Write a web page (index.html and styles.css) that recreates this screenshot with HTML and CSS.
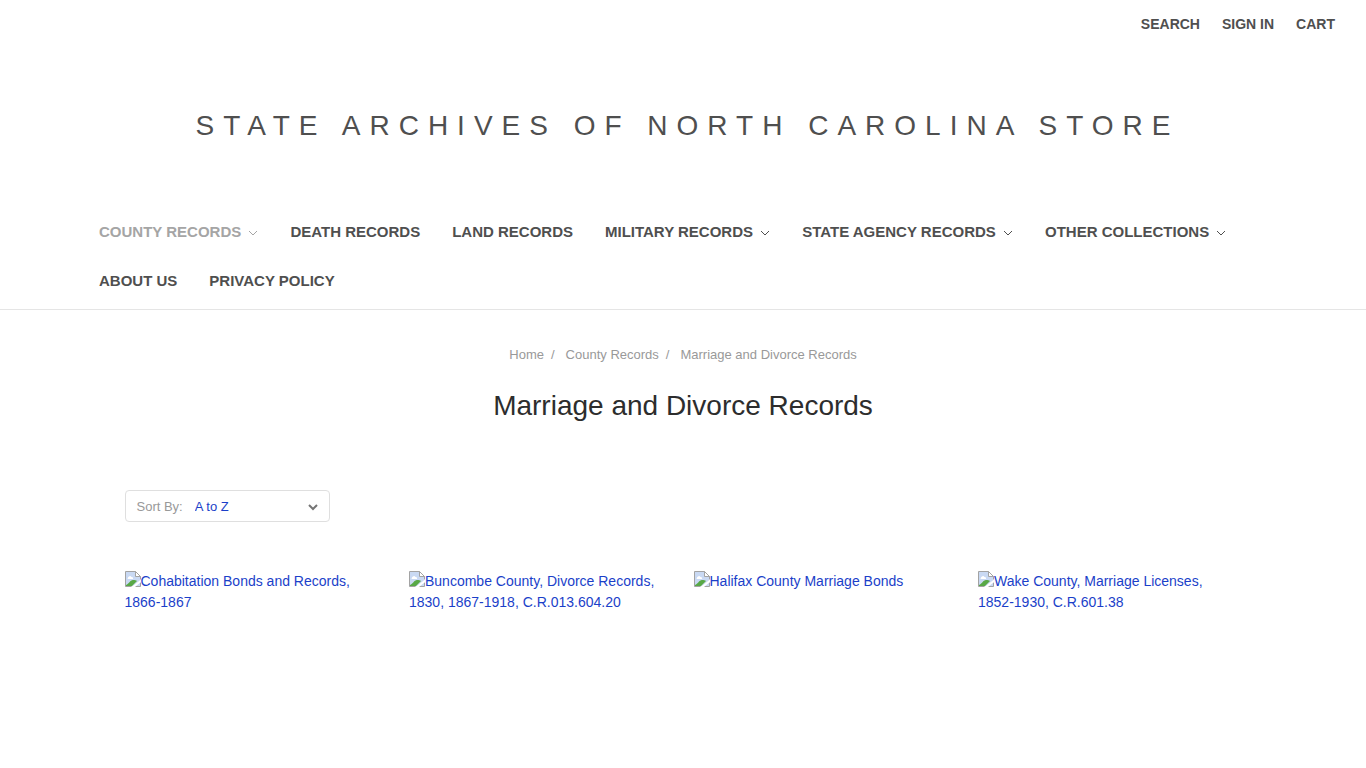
FILE: index.html
```html
<!DOCTYPE html>
<html lang="en">
<head>
  <meta charset="UTF-8">
  <title>County Records - Marriage and Divorce Records - State Archives of North Carolina Store</title>
  <meta name="viewport" content="width=device-width,initial-scale=1">
  <link rel="stylesheet" href="styles.css">
</head>
<body>
  <svg class="sprite" aria-hidden="true">
    <symbol id="icon-chevron" viewBox="0 0 10 10">
      <path d="M1 3l4 4 4-4" fill="none" stroke="currentColor"/>
    </symbol>
    <symbol id="icon-image" viewBox="0 0 16 16">
      <path d="M.5 .5h10l5 5v10H.5z" fill="#c9d9f3"/>
      <path d="M3 6.500a2 2 0 0 1 3.500-.6A1.500 1.500 0 0 1 8 8H2.500z" fill="#fff"/>
      <path d="M1 15v-1c3-1 4-5 7-5 2 0 3 0 4 1l-5 5z" fill="#58a846"/>
      <path d="M.5 15.500V.5h10l5 5v3" fill="none" stroke="#a3a3a3"/>
      <path d="M10.500 .5v5h5z" fill="#fff" stroke="#a3a3a3"/>
      <path d="M.5 15.500h6M10 15.500h5.500v-4" fill="none" stroke="#a3a3a3"/>
      <path d="M16 8.500L6.500 16H10l6-5z" fill="#fff"/>
    </symbol>
  </svg>

  <header class="header">
    <nav class="nav-user">
      <a href="#">Search</a>
      <a href="#">Sign in</a>
      <a href="#">Cart</a>
    </nav>
    <div class="header-logo">
      <a href="#">State Archives of North Carolina Store</a>
    </div>
    <nav class="nav-pages">
      <a class="active" href="#">County Records <svg class="chevron"><use href="#icon-chevron"/></svg></a>
      <a href="#">Death Records</a>
      <a href="#">Land Records</a>
      <a href="#">Military Records <svg class="chevron"><use href="#icon-chevron"/></svg></a>
      <a href="#">State Agency Records <svg class="chevron"><use href="#icon-chevron"/></svg></a>
      <a href="#">Other Collections <svg class="chevron"><use href="#icon-chevron"/></svg></a>
      <a href="#">About Us</a>
      <a href="#">Privacy Policy</a>
    </nav>
  </header>

  <main class="container">
    <nav class="breadcrumbs">
      <a href="#">Home</a>
      <a href="#">County Records</a>
      <a href="#">Marriage and Divorce Records</a>
    </nav>
    <h1 class="page-heading">Marriage and Divorce Records</h1>

    <form class="sort">
      <label for="sort">Sort By:</label>
      <select id="sort" name="sort">
        <option>Featured Items</option>
        <option>Newest Items</option>
        <option selected>A to Z</option>
        <option>Z to A</option>
      </select>
      <svg class="sort-chevron"><use href="#icon-chevron"/></svg>
    </form>

    <div class="product-grid">
      <a href="#"><svg class="thumb"><use href="#icon-image"/></svg>Cohabitation Bonds and Records, 1866-1867</a>
      <a href="#"><svg class="thumb"><use href="#icon-image"/></svg>Buncombe County, Divorce Records, 1830, 1867-1918, C.R.013.604.20</a>
      <a href="#"><svg class="thumb"><use href="#icon-image"/></svg>Halifax County Marriage Bonds</a>
      <a href="#"><svg class="thumb"><use href="#icon-image"/></svg>Wake County, Marriage Licenses, 1852-1930, C.R.601.38</a>
    </div>
  </main>
</body>
</html>
```
FILE: styles.css
```css
* {
  box-sizing: border-box;
}
body {
  margin: 0;
  background: #fff;
  color: #4f4f4f;
  font-family: Arial, "Liberation Sans", Helvetica, sans-serif;
  font-size: 14px;
  line-height: 21px;
}
a {
  color: #1b3fc9;
  text-decoration: none;
}
.sprite {
  display: none;
}

/* header */
.header {
  border-bottom: 1px solid #e5e5e5;
}
.nav-user {
  display: flex;
  justify-content: flex-end;
  gap: 22px;
  padding: 14px 31px;
}
.nav-user a {
  color: #4f4f4f;
  font-weight: bold;
  text-transform: uppercase;
}
.header-logo {
  padding: 56px 20px 60px;
  text-align: center;
  text-indent: 9px;
}
.header-logo a {
  color: #4f4f4f;
  font-size: 28px;
  line-height: 42px;
  letter-spacing: 9px;
  text-transform: uppercase;
}
.nav-pages {
  display: flex;
  flex-wrap: wrap;
  max-width: 1200px;
  margin: 0 auto;
  padding-bottom: 4px;
}
.nav-pages a {
  padding: 14px 16px;
  color: #4f4f4f;
  font-size: 15px;
  font-weight: bold;
  text-transform: uppercase;
}
.nav-pages a.active {
  color: #a5a5a5;
}
.chevron {
  width: 10px;
  height: 10px;
  margin-left: 3px;
  vertical-align: -1px;
}

/* category page */
.container {
  max-width: 1159px;
  margin: 0 auto;
  padding: 34px 21px;
}
.breadcrumbs {
  display: flex;
  justify-content: center;
}
.breadcrumbs a {
  color: #999;
  font-size: 13px;
}
.breadcrumbs a:not(:last-child)::after {
  content: "/";
  margin: 0 11px 0 7px;
}
.page-heading {
  margin: 20px 0 63px;
  color: #2d2d2d;
  font-size: 28px;
  font-weight: normal;
  line-height: 42px;
  text-align: center;
}
.sort {
  position: relative;
  display: flex;
  align-items: center;
  width: 205px;
  height: 32px;
  margin-bottom: 49px;
  border: 1px solid #dfdfdf;
  border-radius: 4px;
  font-size: 13px;
}
.sort label {
  padding-left: 11px;
  color: #999;
}
.sort select {
  flex: 1;
  height: 30px;
  padding: 0 12px;
  border: 0;
  background: none;
  color: #1b3fc9;
  font: inherit;
  appearance: none;
}
.sort-chevron {
  position: absolute;
  top: 11px;
  right: 11px;
  width: 10px;
  height: 10px;
  color: #757575;
  stroke-width: 2;
  pointer-events: none;
}
.product-grid {
  display: grid;
  grid-template-columns: repeat(4, 1fr);
  gap: 21px;
}
.thumb {
  width: 16px;
  height: 16px;
  vertical-align: -1px;
}
```
